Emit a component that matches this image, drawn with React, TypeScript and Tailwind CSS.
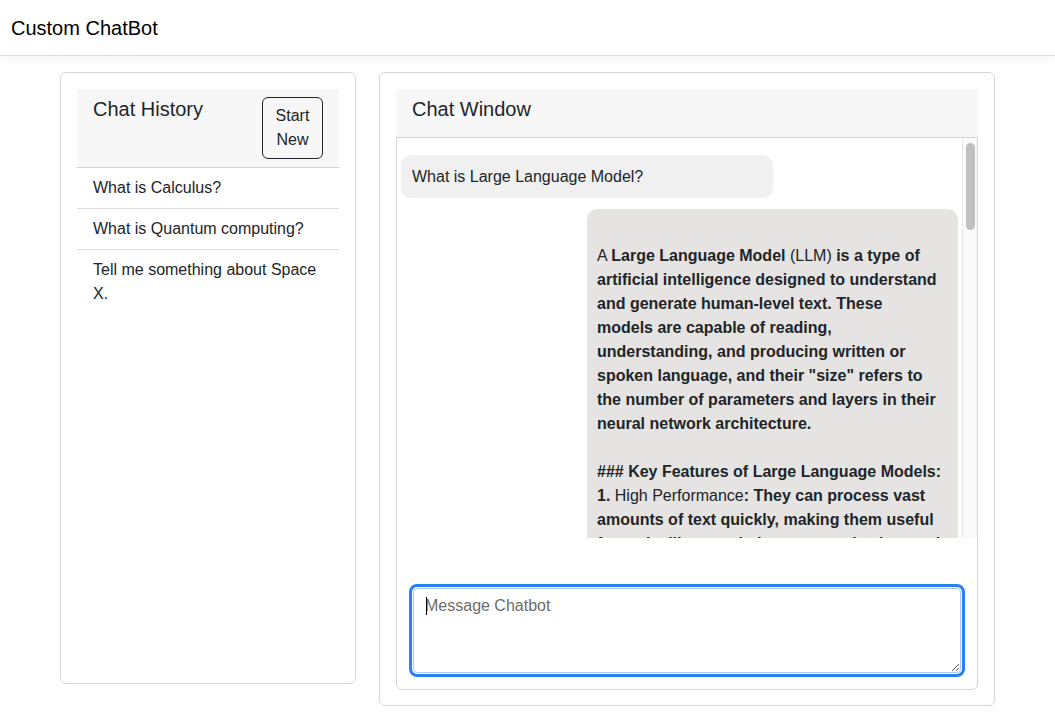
import React from "react";

const history = [
  "What is Calculus?",
  "What is Quantum computing?",
  "Tell me something about Space X.",
];

const App = () => {
  return (
    <div className="min-h-screen bg-white text-[#212529] font-['Liberation_Sans',Arial,sans-serif]">
      {/* Navbar */}
      <nav className="h-[56px] border-b border-[#dcdcdc] shadow-[0_3px_10px_rgba(0,0,0,0.05)] flex items-center px-[11px]">
        <span className="text-[20px] leading-[24px] text-black">Custom ChatBot</span>
      </nav>

      <div className="w-[935px] mx-auto mt-[16px] flex items-start gap-[23px]">
        {/* Chat History card */}
        <div className="w-[296px] h-[612px] border border-[#d6d6d6] rounded-[6px] p-[16px]">
          <div className="bg-[#f7f7f7] border-b border-[#d4d4d4] px-[16px] py-[8px] flex justify-between items-start">
            <h5 className="text-[20px] leading-[24px] font-medium">Chat History</h5>
            <button className="w-[61px] border border-[#212529] rounded-[6px] py-[6px] text-[16px] leading-[24px] text-center">
              Start
              <br />
              New
            </button>
          </div>
          <ul>
            {history.map((h, i) => (
              <li
                key={h}
                className={`px-[16px] py-[8px] text-[16px] leading-[24px] ${i < history.length - 1 ? "border-b border-[#dedede]" : ""}`}
              >
                {h}
              </li>
            ))}
          </ul>
        </div>

        {/* Chat Window card */}
        <div className="w-[616px] h-[634px] border border-[#d6d6d6] rounded-[6px] p-[16px]">
          <div className="bg-[#f7f7f7] h-[48px] px-[16px] pt-[8px]">
            <h4 className="text-[20px] leading-[24px] font-medium">Chat Window</h4>
          </div>
          <div className="border border-[#d4d4d4] rounded-b-[6px] h-[553px]">
            {/* Messages area */}
            <div className="relative h-[400px] overflow-hidden pr-[15px]">
              <div className="px-[4px] pt-[17px] flex flex-col gap-[11px]">
                <div className="w-[372px] bg-[#f1f0f0] rounded-[10px] px-[11px] pt-[10px] pb-[9px] text-[16px] leading-[24px]">
                  What is Large Language Model?
                </div>
                <div className="self-end w-[371px] bg-[#e5e4e2] rounded-[10px] px-[10px] pt-[10px] pb-[10px] text-[16px] leading-[24px] whitespace-nowrap">
                  <div>&nbsp;</div>
                  <div className="pt-[1px]">
                    A <b>Large Language Model</b> (LLM) <b>is a type of</b>
                  </div>
                  <div className="font-bold">artificial intelligence designed to understand</div>
                  <div className="font-bold">and generate human-level text. These</div>
                  <div className="font-bold">models are capable of reading,</div>
                  <div className="font-bold">understanding, and producing written or</div>
                  <div className="font-bold">spoken language, and their "size" refers to</div>
                  <div className="font-bold">the number of parameters and layers in their</div>
                  <div className="font-bold">neural network architecture.</div>
                  <div>&nbsp;</div>
                  <div className="font-bold">### Key Features of Large Language Models:</div>
                  <div>
                    <b>1.</b> High Performance<b>: They can process vast</b>
                  </div>
                  <div className="font-bold">amounts of text quickly, making them useful</div>
                  <div className="font-bold">for tasks like translation, summarization, and</div>
                  <div className="font-bold">content generation.</div>
                </div>
              </div>
              {/* scrollbar */}
              <div className="absolute right-0 top-0 bottom-0 w-[15px] bg-[#fafafa] border-l border-[#e6e6e6]">
                <div className="absolute left-[3px] top-[5px] w-[9px] h-[87px] rounded-full bg-[#c1c1c1]" />
              </div>
            </div>

            {/* Input */}
            <div className="px-[12px] mt-[46px]">
              <div className="relative h-[93px] border-[3px] border-[#2a7ff3] rounded-[8px] p-[1px] bg-white">
                <textarea
                  placeholder="Message Chatbot"
                  className="block w-full h-full border border-[#a8cbfb] rounded-[4px] px-[11px] py-[5px] text-[16px] leading-[24px] outline-none resize-y placeholder:text-[#6c6c6c] font-['Liberation_Sans',Arial,sans-serif]"
                />
                <span className="absolute left-[14px] top-[10px] w-[1px] h-[18px] bg-black" />
              </div>
            </div>
          </div>
        </div>
      </div>
    </div>
  );
};

export default App;
